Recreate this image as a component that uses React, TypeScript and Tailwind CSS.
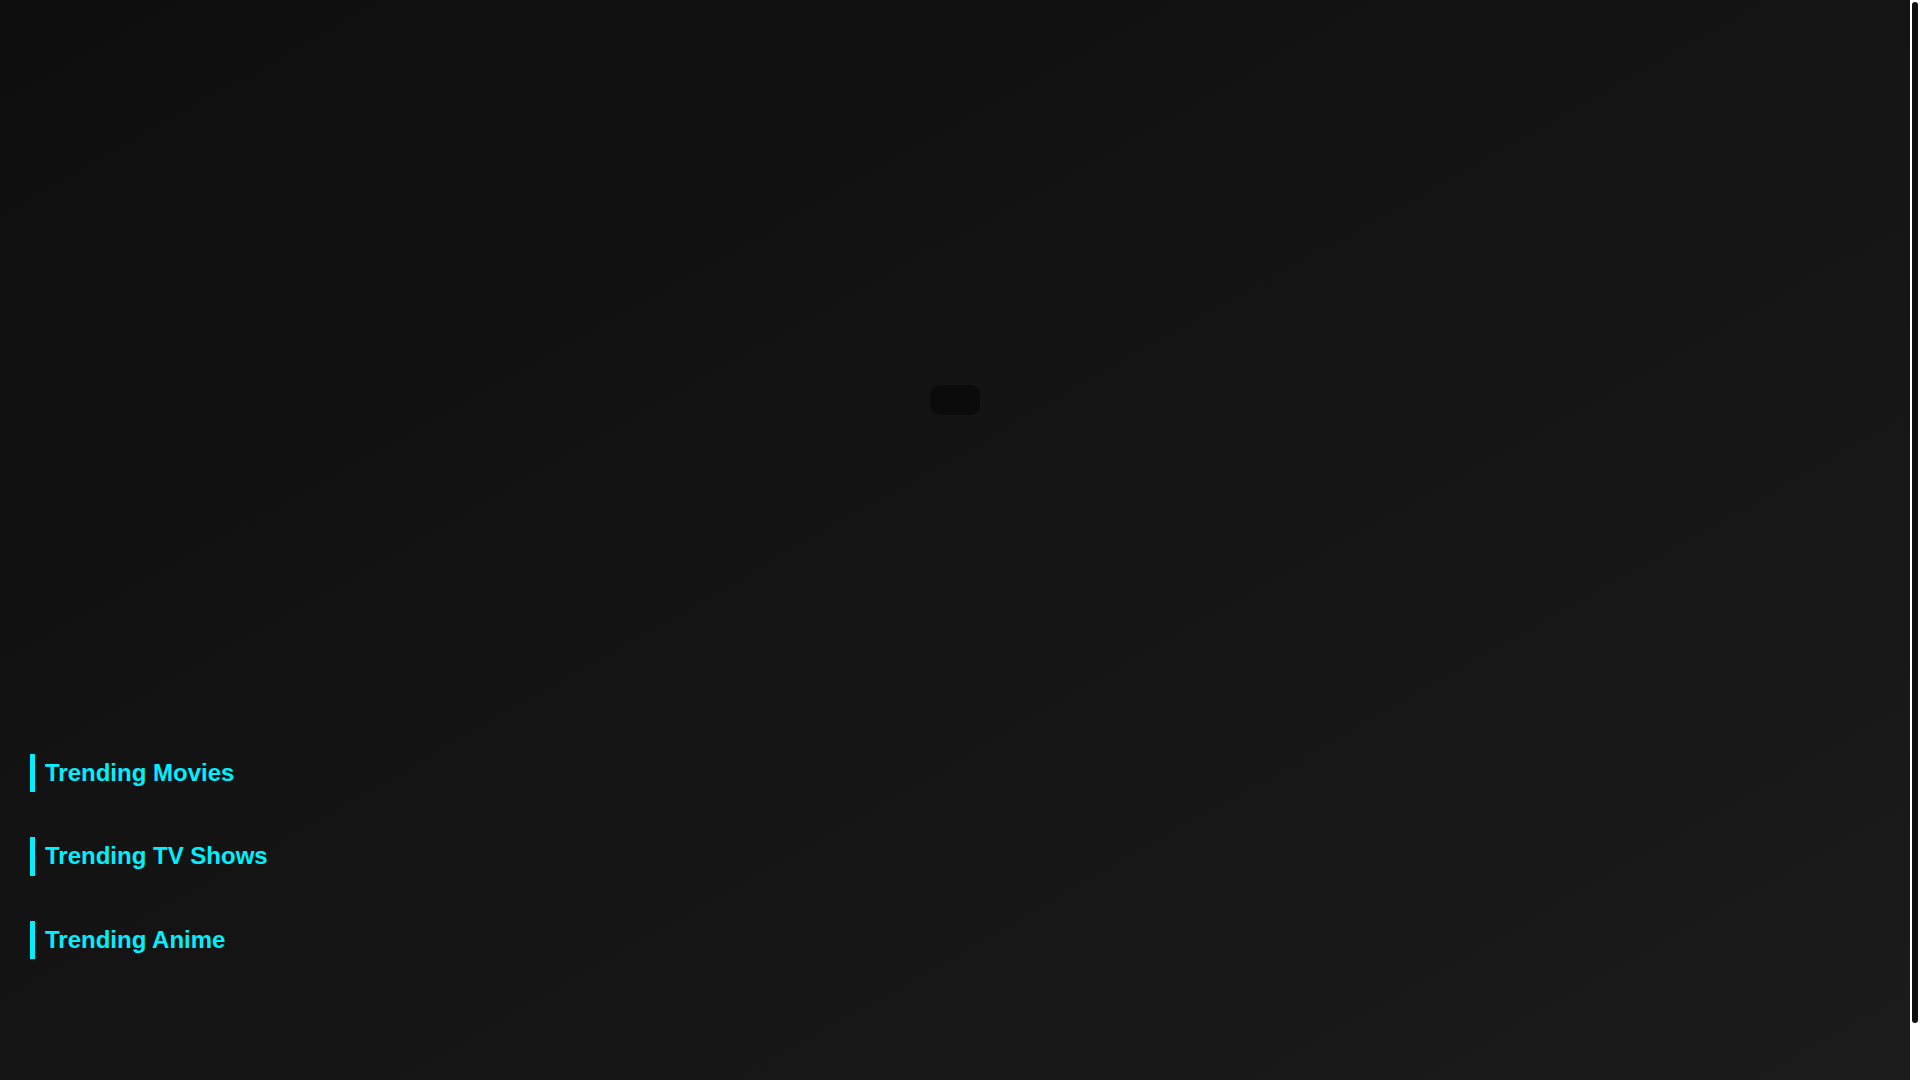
import React from "react";

const sections = ["Trending Movies", "Trending TV Shows", "Trending Anime"];

function SectionRow({ title }: { title: string }) {
  return (
    <section className="mb-[45px]">
      <h2 className="border-l-[5px] border-solid border-[#00f0ff] pl-[10px] text-2xl leading-[1.6] font-bold text-[#00f0ff]">
        {title}
      </h2>
      {/* row is empty while items are loading */}
      <div className="flex gap-4 overflow-x-auto"></div>
    </section>
  );
}

function ScrollRail() {
  return (
    <div className="w-[10px] shrink-0 bg-white p-[2px]">
      <div className="h-[1021px] w-full rounded-full bg-[#0f0f0f]"></div>
    </div>
  );
}

export default function App() {
  return (
    <div
      className="flex h-screen overflow-hidden text-white"
      style={{ fontFamily: '"Liberation Sans", Arial, sans-serif' }}
    >
      <div className="flex-1 overflow-y-auto bg-gradient-to-br from-[#0e0e0e] via-[#141414] to-[#1b1b1b] [scrollbar-width:none]">
        {/* Hero carousel placeholder (loading) */}
        <div className="flex h-[724px] justify-center pt-[385px]">
          <div className="h-[30px] w-[50px] rounded-[10px] bg-[#0b0b0b]"></div>
        </div>

        <main className="px-[30px] pt-[30px] pb-[135px]">
          {sections.map((s) => (
            <SectionRow key={s} title={s} />
          ))}
        </main>
      </div>
      <ScrollRail />
    </div>
  );
}
